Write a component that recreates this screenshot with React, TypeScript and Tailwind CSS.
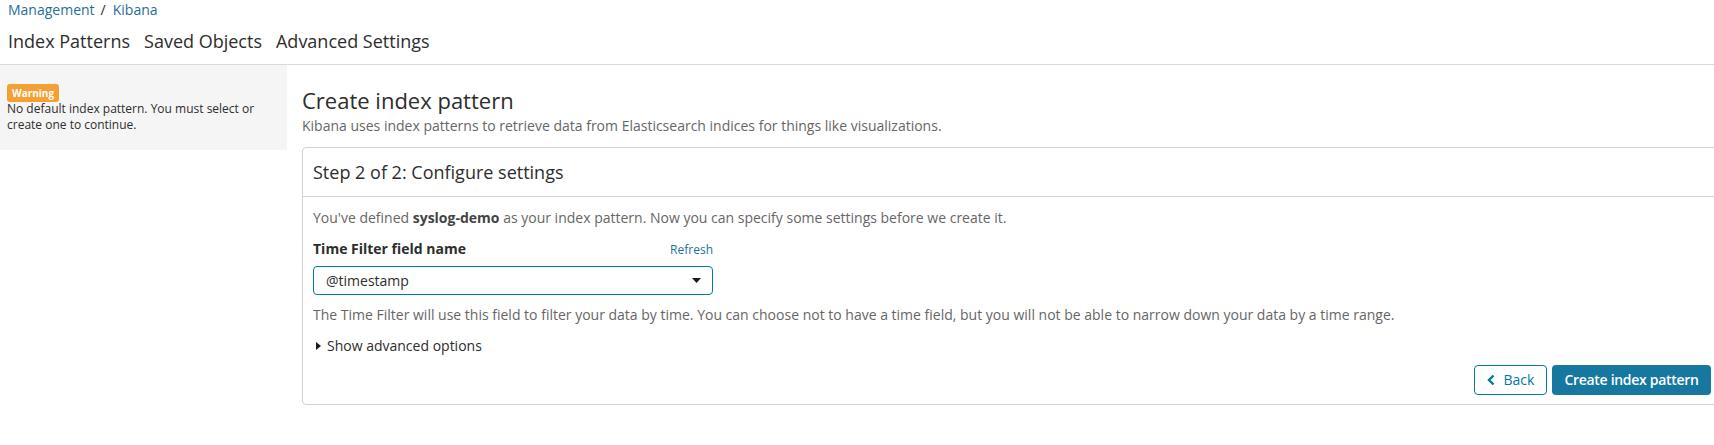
export default function App() {
  return (
    <div className="w-full min-h-screen overflow-hidden bg-white font-['Open_Sans',sans-serif] text-[#2d2d2d]">
      {/* header */}
      <div className="px-2 pb-[11px] border-b border-[#d9d9d9]">
        <div className="text-[14px] leading-5 text-[#1f6f97]">
          <span>Management</span>
          <span className="ml-[6px] mr-[7px] text-[#2d2d2d]">/</span>
          <span>Kibana</span>
        </div>
        <nav className="mt-[9px] flex gap-[14px] text-[18px] leading-6 text-[#2d2d2d]">
          <span>Index Patterns</span>
          <span>Saved Objects</span>
          <span>Advanced Settings</span>
        </nav>
      </div>

      <div className="flex items-start mr-[-8px]">
        {/* sidebar */}
        <aside className="w-[287px] shrink-0 bg-[#f5f5f5] pl-[7px] pt-[19px] pb-[17px]">
          <div className="flex w-fit items-center h-[18px] px-[5px] rounded-[3px] bg-[#f5a035] text-white text-[10px] font-bold leading-none">
            Warning
          </div>
          <p className="text-[12px] leading-4 text-[#2d2d2d] -mt-[1px] pr-4">
            No default index pattern. You must select or create one to continue.
          </p>
        </aside>

        {/* main */}
        <main className="flex-1 ml-[15px] pt-[21px]">
          <h1 className="text-[22px] leading-7 text-[#2d2d2d]">Create index pattern</h1>
          <p className="mt-[2px] text-[14px] leading-5 text-[#666]">
            Kibana uses index patterns to retrieve data from Elasticsearch indices for things like visualizations.
          </p>

          <div className="mt-[11px] border border-[#d3d3d3] rounded-[4px]">
            <div className="h-[49px] flex items-center px-[10px] border-b border-[#d3d3d3] text-[18px] text-[#2d2d2d]">
              Step 2 of 2: Configure settings
            </div>
            <div className="px-[10px] pt-[11px] pb-[9px] text-[14px] leading-5">
              <p className="text-[#666]">
                You've defined <span className="font-bold text-[#444]">syslog-demo</span> as your index pattern. Now you can specify some settings before we create it.
              </p>

              <div className="mt-[11px] w-[400px] flex items-baseline justify-between">
                <span className="font-bold text-[#2d2d2d]">Time Filter field name</span>
                <span className="text-[12px] text-[#1f6f97]">Refresh</span>
              </div>

              <div className="mt-[6px] w-[400px] h-[29px] flex items-center justify-between pl-[12px] pr-[11px] border border-[#0079a5] rounded-[4px] text-[#2d2d2d]">
                <span>@timestamp</span>
                <svg width="9" height="5" viewBox="0 0 9 5">
                  <path d="M0 0 L9 0 L4.5 5 Z" fill="#1a1a1a" />
                </svg>
              </div>

              <p className="mt-[10px] text-[#666]">
                The Time Filter will use this field to filter your data by time. You can choose not to have a time field, but you will not be able to narrow down your data by a time range.
              </p>

              <div className="mt-[11px] flex items-center gap-[6px] text-[#2d2d2d]">
                <svg width="5" height="8" viewBox="0 0 5 8" className="ml-[3px]">
                  <path d="M0 0 L5 4 L0 8 Z" fill="#1a1a1a" />
                </svg>
                <span>Show advanced options</span>
              </div>

              <div className="mt-[9px] flex justify-end gap-[5px]">
                <button className="h-[30px] w-[73px] flex items-center justify-center gap-[9px] border border-[#0079a5] rounded-[4px] bg-white text-[#0079a5] text-[14px]">
                  <svg width="8" height="12" viewBox="0 0 8 12">
                    <path d="M6.5 1.5 L2 6 L6.5 10.5" fill="none" stroke="#0079a5" strokeWidth="2.4" />
                  </svg>
                  <span>Back</span>
                </button>
                <button className="h-[30px] w-[159px] flex items-center justify-center rounded-[4px] bg-[#16789f] text-white text-[14px] font-semibold tracking-[-0.3px]">
                  Create index pattern
                </button>
              </div>
            </div>
          </div>
        </main>
      </div>
    </div>
  )
}
